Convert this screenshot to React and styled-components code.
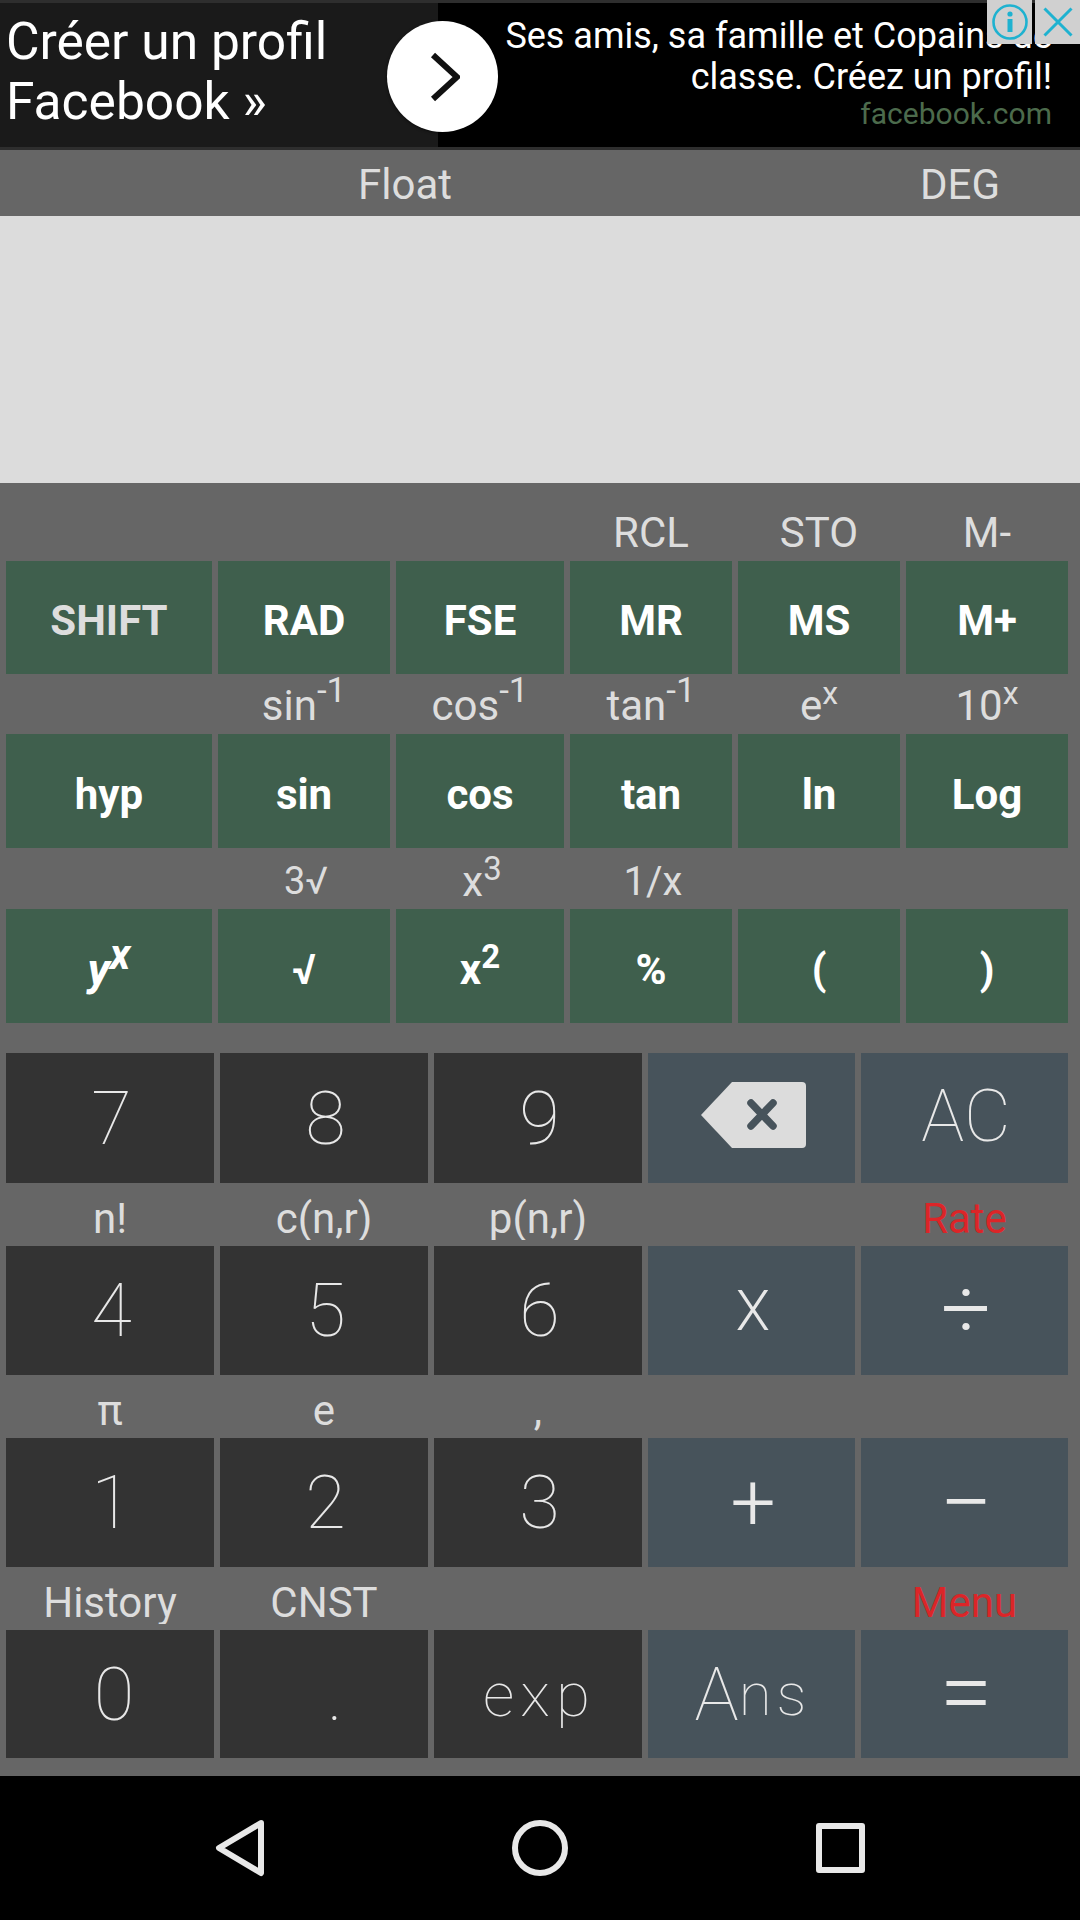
import React from 'react'
import styled, { createGlobalStyle } from 'styled-components'

const Global = createGlobalStyle`
html, body { margin: 0; padding: 0; background: #666; }
* { box-sizing: border-box; }
`

const Page = styled.div`
width: 1080px;
height: 1920px;
display: flex;
flex-direction: column;
overflow: hidden;
background: #666;
font-family: Roboto, "Liberation Sans", sans-serif;
`

const Ad = styled.div`
position: relative;
height: 150px;
flex: none;
display: flex;
background: #2e2e2e;
padding: 3px 0;
`
const AdLeft = styled.div`
width: 438px;
background: #1a1a1a;
color: #fff;
font-size: 51.5px;
line-height: 60px;
padding: 9px 0 0 6px;
`
const AdRight = styled.div`
flex: 1;
background: #000;
color: #fff;
text-align: right;
font-size: 36px;
line-height: 41px;
padding: 13px 28px 0 0;
white-space: nowrap;
`
const AdUrl = styled.div`
color: #4c6b4c;
font-size: 30px;
line-height: 32px;
`
const AdArrow = styled.div`
position: absolute;
left: 387px;
top: 21px;
width: 111px;
height: 111px;
border-radius: 50%;
background: #fff;
box-shadow: 0 1px 3px rgba(0,0,0,.6);
display: flex;
align-items: center;
justify-content: center;
padding-left: 4px;
`
const AdCorner = styled.div`
position: absolute;
top: 0;
left: ${p => p.$left}px;
width: 45px;
height: 44px;
background: #d0d0d0;
display: flex;
align-items: center;
justify-content: center;
`

const StatusBar = styled.div`
height: 66px;
flex: none;
display: grid;
grid-template-columns: 810px 1fr;
color: #ddd;
font-size: 42px;
line-height: 70px;
text-align: center;
`
const StatusCell = styled.div`
padding-left: ${p => p.$pad || 0}px;
`
const Display = styled.div`
height: 267px;
flex: none;
background: #dcdcdc;
`

const Keypad = styled.div`
flex: 1;
padding: 0 12px 0 6px;
display: flex;
flex-direction: column;
`
const FnGrid = styled.div`
display: grid;
grid-template-columns: 206px 172px 168px 162px 162px 162px;
column-gap: 6px;
`
const NumGrid = styled.div`
display: grid;
grid-template-columns: 208px 208px 208px 207px 207px;
column-gap: 6px;
`
const Label = styled.div`
height: ${p => p.$h}px;
margin-bottom: 6px;
overflow: ${p => (p.$clip ? 'hidden' : 'visible')};
text-align: center;
padding-left: ${p => p.$left || 0}px;
font-size: ${p => p.$size || 42}px;
line-height: ${p => p.$h + (p.$drop || 0) * 2}px;
color: ${p => (p.$red ? '#dc2528' : '#ddd')};
white-space: nowrap;
`
const LabelSup = styled.sup`
font-size: ${p => p.$size || 33}px;
line-height: 0;
vertical-align: ${p => p.$raise || 16}px;
`
const FnKey = styled.div`
height: ${p => p.$h}px;
background: #3f5f4d;
color: ${p => (p.$dim ? '#ddd' : '#fff')};
font-size: 42px;
font-weight: 700;
display: flex;
align-items: center;
justify-content: center;
padding-top: 6px;
`
const FnSup = styled.sup`
font-size: ${p => p.$size || 33}px;
line-height: 0;
vertical-align: ${p => p.$raise || 16}px;
`
const Power = styled.span`
font-size: 46px;
font-style: italic;
`
const NumKey = styled.div`
height: ${p => p.$h}px;
background: ${p => (p.$op ? '#47535b' : '#333')};
color: #e8e8e8;
font-size: ${p => p.$size || 74}px;
font-weight: ${p => p.$weight || 100};
display: flex;
align-items: center;
justify-content: center;
padding-left: ${p => p.$left ?? 3}px;
padding-bottom: ${p => p.$lift || 0}px;
`
const SmallLetters = styled.span`
font-size: ${p => p.$size || 58}px;
letter-spacing: ${p => p.$track || 3}px;
`
const Gap = styled.div`
height: 30px;
flex: none;
`

const NavBar = styled.div`
height: 144px;
flex: none;
background: #000;
display: flex;
`

function Chevron() {
  return (
    <svg width="30" height="50" viewBox="0 0 30 50">
      <path d="M3 3 L27 25 L3 47" fill="none" stroke="#111" strokeWidth="6" />
    </svg>
  )
}

function NavIcons() {
  return (
    <svg width="1080" height="144" viewBox="0 0 1080 144">
      <path d="M261 47 L219 72 L261 97 Z" fill="none" stroke="#e8e8e8" strokeWidth="6" strokeLinejoin="round" />
      <circle cx="540" cy="72" r="25" fill="none" stroke="#e8e8e8" strokeWidth="6" />
      <rect x="819" y="50" width="43" height="44" fill="none" stroke="#e8e8e8" strokeWidth="6" strokeLinejoin="round" />
    </svg>
  )
}

function Backspace() {
  return (
    <svg width="105" height="68" viewBox="0 0 105 68">
      <path d="M31 1 H101 Q105 1 105 5 V63 Q105 67 101 67 H31 L0 34 Z" fill="#dcdcdc" />
      <path d="M50 22 L72 45 M72 22 L50 45" stroke="#47535b" strokeWidth="7.5" strokeLinecap="round" />
    </svg>
  )
}

export default function App() {
  return (
    <Page>
      <Global />
      <Ad>
        <AdLeft>Créer un profil<br />Facebook »</AdLeft>
        <AdRight>
          Ses amis, sa famille et Copains de<br />classe. Créez un profil!
          <AdUrl>facebook.com</AdUrl>
        </AdRight>
        <AdArrow><Chevron /></AdArrow>
        <AdCorner $left={987}>
          <svg width="38" height="38" viewBox="0 0 38 38">
            <circle cx="19" cy="19" r="16.5" fill="none" stroke="#1eb2d0" strokeWidth="2.6" />
            <circle cx="19" cy="11" r="2.6" fill="#1eb2d0" />
            <rect x="16.5" y="16" width="5" height="13" fill="#1eb2d0" />
          </svg>
        </AdCorner>
        <AdCorner $left={1035}>
          <svg width="34" height="34" viewBox="0 0 34 34">
            <path d="M3.5 3.5 L30.5 30.5 M30.5 3.5 L3.5 30.5" stroke="#1eb2d0" strokeWidth="3" />
          </svg>
        </AdCorner>
      </Ad>
      <StatusBar>
        <StatusCell>Float</StatusCell>
        <StatusCell $pad={30}>DEG</StatusCell>
      </StatusBar>
      <Display />
      <Keypad>
        <FnGrid>
          <Label $h={72} /><Label $h={72} /><Label $h={72} />
          <Label $h={72} $drop={14}>RCL</Label><Label $h={72} $drop={14}>STO</Label><Label $h={72} $drop={14}>M-</Label>
          <FnKey $h={113} $dim>SHIFT</FnKey><FnKey $h={113}>RAD</FnKey><FnKey $h={113}>FSE</FnKey>
          <FnKey $h={113}>MR</FnKey><FnKey $h={113}>MS</FnKey><FnKey $h={113}>M+</FnKey>
          <Label $h={54} />
          <Label $h={54} $drop={5}>sin<LabelSup $size={35} $raise={18}>-1</LabelSup></Label>
          <Label $h={54} $drop={5}>cos<LabelSup $size={35} $raise={18}>-1</LabelSup></Label>
          <Label $h={54} $drop={5}>tan<LabelSup $size={35} $raise={18}>-1</LabelSup></Label>
          <Label $h={54} $drop={5}>e<LabelSup $size={32}>x</LabelSup></Label>
          <Label $h={54} $drop={5}>10<LabelSup $size={32}>x</LabelSup></Label>
          <FnKey $h={114}>hyp</FnKey><FnKey $h={114}>sin</FnKey><FnKey $h={114}>cos</FnKey>
          <FnKey $h={114}>tan</FnKey><FnKey $h={114}>ln</FnKey><FnKey $h={114}>Log</FnKey>
          <Label $h={55} />
          <Label $h={55} $drop={6} $size={38} $left={4}>3√</Label>
          <Label $h={55} $drop={6} $left={4}>x<LabelSup $raise={16}>3</LabelSup></Label>
          <Label $h={55} $drop={6} $size={40} $left={4}>1/x</Label>
          <Label $h={55} /><Label $h={55} />
          <FnKey $h={114}><Power>y<FnSup $size={42}>x</FnSup></Power></FnKey>
          <FnKey $h={114}>√</FnKey>
          <FnKey $h={114}><span>x<FnSup>2</FnSup></span></FnKey>
          <FnKey $h={114}>%</FnKey><FnKey $h={114}>(</FnKey><FnKey $h={114}>)</FnKey>
        </FnGrid>
        <Gap />
        <NumGrid>
          <NumKey $h={130}>7</NumKey><NumKey $h={130}>8</NumKey><NumKey $h={130}>9</NumKey>
          <NumKey $h={130} $op $lift={6}><Backspace /></NumKey><NumKey $h={130} $op $size={72} $lift={4}>AC</NumKey>
          <Label $h={57} $drop={7}>n!</Label><Label $h={57} $drop={7} $clip>c(n,r)</Label><Label $h={57} $drop={7} $clip>p(n,r)</Label>
          <Label $h={57} /><Label $h={57} $drop={7} $red>Rate</Label>
          <NumKey $h={129}>4</NumKey><NumKey $h={129}>5</NumKey><NumKey $h={129}>6</NumKey>
          <NumKey $h={129} $op $size={56} $weight={300}>X</NumKey><NumKey $h={129} $op $size={88} $lift={4} $weight={300}>÷</NumKey>
          <Label $h={57} $drop={7}>π</Label><Label $h={57} $drop={7}>e</Label><Label $h={57} $drop={7}>,</Label>
          <Label $h={57} /><Label $h={57} />
          <NumKey $h={129}>1</NumKey><NumKey $h={129}>2</NumKey><NumKey $h={129}>3</NumKey>
          <NumKey $h={129} $op $size={80} $weight={300}>+</NumKey><NumKey $h={129} $op $size={94} $weight={300}>−</NumKey>
          <Label $h={57} $drop={7} $clip>History</Label><Label $h={57} $drop={7}>CNST</Label><Label $h={57} />
          <Label $h={57} /><Label $h={57} $drop={7} $red>Menu</Label>
          <NumKey $h={128} $left={8}>0</NumKey><NumKey $h={128} $left={22}>.</NumKey><NumKey $h={128}><SmallLetters $size={62} $track={6}>exp</SmallLetters></NumKey>
          <NumKey $h={128} $op>A<SmallLetters $size={60} $track={5}>ns</SmallLetters></NumKey><NumKey $h={128} $op $size={96} $lift={4} $weight={300}>=</NumKey>
        </NumGrid>
      </Keypad>
      <NavBar><NavIcons /></NavBar>
    </Page>
  )
}
